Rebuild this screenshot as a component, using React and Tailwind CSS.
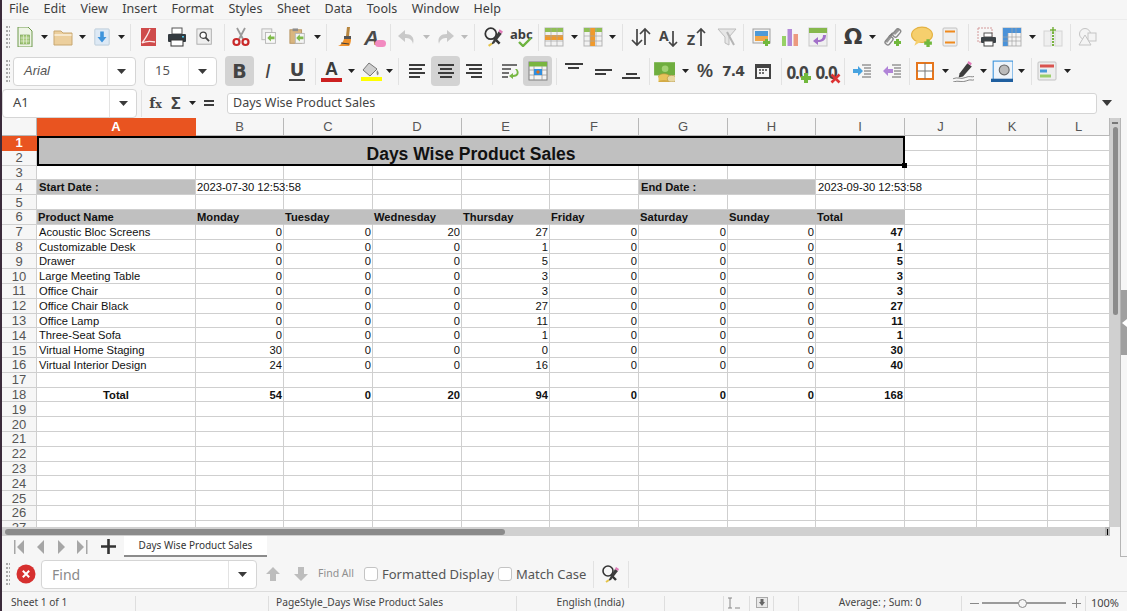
import React from 'react';

const UI_FONT = { fontFamily: '"Noto Sans", sans-serif' };

const Svg = ({ size = 20, children }) => (
  <svg width={size} height={size} viewBox="0 0 20 20" className="block">{children}</svg>
);

// ---- small toolbar parts ----
const Tool = ({ className = 'w-7', on, children }) => (
  <div className={`h-[30px] shrink-0 flex items-center justify-center rounded ${on ? 'bg-[#d3d3d3]' : ''} ${className}`}>{children}</div>
);

const Arrow = ({ className = 'w-2.5', color = '#222' }) => (
  <div className={`shrink-0 flex justify-center ${className}`}>
    <svg width="7" height="4" viewBox="0 0 7 4"><path d="M0 0h7L3.5 4z" fill={color} /></svg>
  </div>
);

const Sep = ({ className = 'w-2' }) => (
  <div className={`shrink-0 flex justify-center ${className}`}><div className="w-px h-[27px] bg-[#e2e2e2]" /></div>
);

const Grip = () => (
  <div className="w-[7px] shrink-0 flex flex-col gap-[2px] items-start pl-[2px]">
    {[0, 1, 2, 3, 4, 5].map((i) => (
      <div key={i} className="flex gap-[1px]"><div className="w-[1.5px] h-[2px] bg-[#aaa]" /><div className="w-[1.5px] h-[2px] bg-[#aaa]" /></div>
    ))}
  </div>
);

const Lines = ({ rows }) => (
  <Svg>{rows.map(([x, y, w, t = 2], i) => <rect key={i} x={x} y={y} width={w} height={t} fill="#3c3c3c" />)}</Svg>
);

const SheetGrid = ({ kind }) => (
  <Svg>
    <rect x="1" y="1" width="18" height="18" fill="#f2f2f2" stroke="#b5b5b5" />
    <rect x="1" y="1" width="18" height="4" fill="#8fbf55" />
    {kind === 'row' && <rect x="1" y="8" width="18" height="5" fill="#f09a2c" />}
    {kind === 'col' && <rect x="7" y="1" width="5" height="18" fill="#f09a2c" />}
    <path d="M1 9h18M1 14h18M7 1v18M13 1v18" stroke="#a8a8a8" strokeWidth="0.7" />
  </Svg>
);

const Magnifier = () => (
  <Svg size={22}>
    <circle cx="8" cy="7" r="5" fill="none" stroke="#333" strokeWidth="1.6" />
    <path d="M11 11l5 5" stroke="#333" strokeWidth="2.4" />
    <path d="M15 5l3 2-7 9-3 1z" fill="#3c3c3c" />
    <path d="M16 3l3 2-1 2-3-2z" fill="#e07ab8" />
    <path d="M6 18l3-2" stroke="#e5c44a" strokeWidth="2" />
  </Svg>
);

const PlusBadge = ({ x = 12, y = 12 }) => (
  <path d={`M${x + 2} ${y}h3v2h2v3h-2v2h-3v-2h-2v-3h2z`} fill="#71b83d" transform="translate(-1 0)" />
);

const ToolbarOne = () => (
  <div className="flex items-center h-[34px] pl-[2px]">
    <Grip />
    <Tool>
      <Svg>
        <path d="M3 0h10l4 4v16H3z" fill="#eef4e6" stroke="#6f9a4c" />
        <rect x="5.5" y="8" width="9" height="9" fill="#a8cb7d" stroke="#6f9a4c" strokeWidth="0.6" />
        <path d="M5.5 11h9M5.5 14h9M8.5 8v9M11.5 8v9" stroke="#eef4e6" strokeWidth="0.6" />
      </Svg>
    </Tool>
    <Arrow />
    <Tool>
      <Svg>
        <path d="M1 4h7l2 2h9v12H1z" fill="#eccf9d" stroke="#c8a771" />
        <rect x="1.5" y="7" width="17" height="2" fill="#f7e8cd" />
      </Svg>
    </Tool>
    <Arrow />
    <Tool className="w-7 ml-px">
      <Svg size={18}>
        <rect x="2" y="1" width="16" height="18" rx="1" fill="#dde9f5" stroke="#b9c9d8" />
        <path d="M8 4h4v6h3l-5 6-5-6h3z" fill="#3d94dc" />
      </Svg>
    </Tool>
    <Arrow />
    <Sep />
    <Tool>
      <Svg>
        <rect x="3" y="1" width="15" height="18" fill="#cf4b4b" />
        <path d="M12 2C10 8 7 12 4 16c4-2 9-2 13-1" fill="none" stroke="#fbe9e9" strokeWidth="1.3" />
      </Svg>
    </Tool>
    <Tool className="w-7 ml-px">
      <Svg>
        <rect x="5" y="1" width="10" height="6" fill="#fff" stroke="#555" />
        <rect x="1" y="7" width="18" height="8" rx="1" fill="#333a3f" />
        <rect x="4" y="13" width="12" height="6" fill="#fff" stroke="#333" />
        <rect x="15" y="9" width="2" height="1.5" fill="#4ec3e8" />
      </Svg>
    </Tool>
    <Tool>
      <Svg size={18}>
        <rect x="1" y="1" width="16" height="17" fill="#efefef" stroke="#a9a9a9" />
        <circle cx="8" cy="8" r="3.5" fill="#fff" stroke="#444" strokeWidth="1.4" />
        <path d="M10.5 10.5l4 4" stroke="#444" strokeWidth="2" />
      </Svg>
    </Tool>
    <Sep className="w-2.5" />
    <Tool className="w-6">
      <Svg>
        <path d="M6 1l6 11M14 1L8 12" stroke="#9a9a9a" strokeWidth="1.8" />
        <circle cx="5.5" cy="15" r="3" fill="none" stroke="#c92a2a" strokeWidth="2.2" />
        <circle cx="14.5" cy="15" r="3" fill="none" stroke="#c92a2a" strokeWidth="2.2" />
      </Svg>
    </Tool>
    <Tool className="w-7 ml-[3px]">
      <Svg size={18}>
        <rect x="1" y="1" width="11" height="12" fill="#f1f1f1" stroke="#b4b4b4" />
        <rect x="5" y="5" width="11" height="12" fill="#f8f8f8" stroke="#b4b4b4" />
        <path d="M7 11l4-4v2.5h4v3h-4V15z" fill="#7fbb4a" />
      </Svg>
    </Tool>
    <Tool>
      <Svg size={18}>
        <rect x="1" y="2" width="13" height="15" fill="#d9b67f" stroke="#b6935f" />
        <rect x="4" y="0.5" width="6" height="3" fill="#8c8c8c" />
        <rect x="7" y="6" width="10" height="11" fill="#f4f4f4" stroke="#b4b4b4" />
        <path d="M8 11l4-4v2.5h4v3h-4V15z" fill="#7fbb4a" />
      </Svg>
    </Tool>
    <Arrow />
    <Sep />
    <Tool className="w-[30px]">
      <Svg>
        <path d="M12 0h3l-1 9h-3z" fill="#b7863f" />
        <path d="M9 9h7v3H9z" fill="#555" />
        <path d="M9 12h7c0 3-1 6-2 7H3c3-1 5-4 6-7z" fill="#f0912a" />
        <path d="M6 16l8 1" stroke="#3c3c3c" strokeWidth="1" />
      </Svg>
    </Tool>
    <Tool>
      <div className="relative w-5 h-5">
        <span className="italic font-bold text-[21px] leading-5 text-[#4a4a4a]" style={{ fontFamily: '"Liberation Sans", sans-serif' }}>A</span>
        <div className="absolute right-[-2px] bottom-0 w-[11px] h-[7px] bg-[#f28ac0] rounded-sm" />
      </div>
    </Tool>
    <Sep className="w-[5px]" />
    <Tool>
      <Svg>
        <path d="M8 3L1 9l7 6v-4c4 0 7 1 8 6 2-7-2-10-8-10z" fill="#c9c9c9" />
      </Svg>
    </Tool>
    <Arrow color="#bbb" />
    <Tool>
      <Svg>
        <path d="M12 3l7 6-7 6v-4c-4 0-7 1-8 6-2-7 2-10 8-10z" fill="#c9c9c9" />
      </Svg>
    </Tool>
    <Arrow color="#bbb" />
    <Sep className="w-2.5" />
    <Tool><Magnifier /></Tool>
    <Tool>
      <div className="relative w-[22px] h-5 text-center">
        <span className="font-bold text-[13px] leading-[14px] block text-[#3c3c3c]" style={UI_FONT}>abc</span>
        <svg width="14" height="10" viewBox="0 0 14 10" className="absolute right-0 bottom-0"><path d="M1 5l4 4 8-8" fill="none" stroke="#6db33f" strokeWidth="2.4" /></svg>
      </div>
    </Tool>
    <Sep className="w-1.5" />
    <Tool className="w-[26px]"><SheetGrid kind="row" /></Tool>
    <Arrow className="w-2.5 ml-[2px]" />
    <Tool><SheetGrid kind="col" /></Tool>
    <Arrow />
    <Sep className="w-2.5" />
    <Tool>
      <Svg>
        <path d="M6 2v16M1 13l5 5 5-5M14 18V2M9 7l5-5 5 5" fill="none" stroke="#444" strokeWidth="1.7" />
      </Svg>
    </Tool>
    <Tool>
      <div className="relative w-5 h-5">
        <span className="absolute left-0 top-[-2px] font-bold text-[14px] text-[#444]" style={UI_FONT}>A</span>
        <svg width="20" height="20" viewBox="0 0 20 20" className="absolute inset-0"><path d="M14 4v15M10 15l4 4 4-4" fill="none" stroke="#444" strokeWidth="1.7" /></svg>
      </div>
    </Tool>
    <Tool>
      <div className="relative w-5 h-5">
        <span className="absolute left-0 bottom-[-3px] font-bold text-[14px] text-[#444]" style={UI_FONT}>Z</span>
        <svg width="20" height="20" viewBox="0 0 20 20" className="absolute inset-0"><path d="M14 19V2M10 6l4-4 4 4" fill="none" stroke="#444" strokeWidth="1.7" /></svg>
      </div>
    </Tool>
    <Tool className="w-7 ml-0.5">
      <Svg>
        <path d="M1 2h18l-7 8v8l-4-2v-6z" fill="#e6e6e6" stroke="#bdbdbd" />
        <path d="M10 5l7 13" stroke="#b5b5b5" strokeWidth="2" />
      </Svg>
    </Tool>
    <Sep className="w-[5px]" />
    <Tool className="w-8">
      <Svg>
        <rect x="1" y="2" width="17" height="14" fill="#f1f1f1" stroke="#9f9f9f" />
        <rect x="3" y="4" width="13" height="5" fill="#4d9ad8" />
        <path d="M3 9h13v5H3z" fill="#f0a64a" />
        <PlusBadge />
      </Svg>
    </Tool>
    <Tool className="w-6">
      <Svg>
        <rect x="2" y="9" width="4" height="10" fill="#97d166" />
        <rect x="7.5" y="2" width="4.5" height="17" fill="#b289d8" />
        <rect x="13.5" y="7" width="4.5" height="12" fill="#ec9a80" />
      </Svg>
    </Tool>
    <Tool className="w-7 ml-0.5">
      <Svg>
        <rect x="1" y="1" width="18" height="18" fill="#f0f0f0" stroke="#c7c7c7" />
        <rect x="1" y="1" width="18" height="5" fill="#86b84c" />
        <path d="M18 8c0 6-4 7-8 7v3l-5-4 5-4v3c3 0 5-1 5-5z" fill="#a371c9" />
      </Svg>
    </Tool>
    <Sep className="w-[7px]" />
    <Tool>
      <span className="font-bold text-[22px] leading-none text-[#3d3d3d]" style={{ fontFamily: '"DejaVu Sans", sans-serif' }}>Ω</span>
    </Tool>
    <Arrow />
    <Tool className="w-7 ml-0.5">
      <Svg>
        <path d="M3 15L8 9M11 7l5-5" stroke="#9a9a9a" strokeWidth="3" />
        <path d="M6 10l4-4" stroke="#777" strokeWidth="2" />
        <rect x="4" y="9" width="5" height="9" rx="2" fill="none" stroke="#8a8a8a" strokeWidth="1.4" transform="rotate(40 6 13)" />
        <rect x="11" y="1" width="5" height="9" rx="2" fill="none" stroke="#8a8a8a" strokeWidth="1.4" transform="rotate(40 13 6)" />
        <PlusBadge />
      </Svg>
    </Tool>
    <Tool className="w-7 ml-px">
      <Svg size={22}>
        <ellipse cx="10" cy="8" rx="9.5" ry="7" fill="#f6cf6d" stroke="#e4b243" />
        <path d="M5 13l-2 5 6-4z" fill="#f6cf6d" />
        <PlusBadge x={13} y={12} />
      </Svg>
    </Tool>
    <Tool>
      <Svg>
        <rect x="3" y="1" width="14" height="18" rx="1" fill="#efefef" stroke="#c2c2c2" />
        <rect x="5" y="3.5" width="10" height="2" fill="#f08a1d" />
        <rect x="5" y="14.5" width="10" height="2" fill="#f08a1d" />
      </Svg>
    </Tool>
    <Sep />
    <Tool className="w-7 ml-px">
      <Svg>
        <rect x="1" y="1" width="14" height="14" fill="#f7f7f7" stroke="#d49a9a" strokeDasharray="2 1" />
        <rect x="7" y="6" width="8" height="4" fill="#fff" stroke="#555" />
        <rect x="4" y="10" width="15" height="6" rx="1" fill="#3c4347" />
        <rect x="7" y="14" width="9" height="5" fill="#fff" stroke="#444" />
      </Svg>
    </Tool>
    <Tool className="w-[22px]">
      <Svg>
        <rect x="1" y="1" width="18" height="18" fill="#f4f4f4" stroke="#b5b5b5" />
        <rect x="1" y="1" width="18" height="5" fill="#4a92d9" />
        <rect x="1" y="1" width="5" height="18" fill="#4a92d9" />
        <path d="M1 10h18M1 14h18M10 1v18M14 1v18M6 6v13" stroke="#a5a5a5" strokeWidth="0.7" />
      </Svg>
    </Tool>
    <Arrow className="w-2.5 ml-1" />
    <Tool className="w-7 ml-[2px]">
      <Svg>
        <rect x="1" y="4" width="7" height="15" fill="#efefef" stroke="#d4d4d4" />
        <rect x="12" y="4" width="7" height="15" fill="#efefef" stroke="#d4d4d4" />
        <path d="M10 2v17" stroke="#79b340" strokeWidth="2" strokeDasharray="2 1" />
        <path d="M7 3h6M10 0v6" stroke="#79b340" strokeWidth="1.5" />
      </Svg>
    </Tool>
    <Sep className="w-1.5" />
    <Tool className="w-7 ml-px">
      <Svg>
        <circle cx="7" cy="7" r="5.5" fill="#f4f4f4" stroke="#c4c4c4" />
        <rect x="10" y="6" width="8" height="8" fill="#f4f4f4" stroke="#c4c4c4" />
        <path d="M7 8l6 10H1z" fill="#f4f4f4" stroke="#c4c4c4" />
      </Svg>
    </Tool>
  </div>
);

const Combo = ({ className, split, children }) => (
  <div className={`h-[29px] shrink-0 flex items-stretch bg-white border border-[#d5d5d5] rounded-[4px] ${className}`}>
    <div className="flex-1 flex items-center pl-2.5 text-[13px] text-[#555]">{children}</div>
    <div className={`border-l border-[#e3e3e3] flex items-center justify-center ${split}`}>
      <svg width="9" height="5" viewBox="0 0 9 5"><path d="M0 0h9L4.5 5z" fill="#3a3a3a" /></svg>
    </div>
  </div>
);

const BIG = 'font-bold text-[#444] leading-none';

const DecimalIcon = ({ children }) => (
  <div className="relative w-[24px] h-5 text-center">
    <span className={`${BIG} text-[17px] tracking-[-1px]`} style={UI_FONT}>0.0</span>
    {children}
  </div>
);

const ToolbarTwo = () => (
  <div className="flex items-center h-[34px] pl-[2px]">
    <Grip />
    <div className="w-0.5 shrink-0" />
    <Combo className="w-[123px]" split="w-[28px]"><span className="italic" style={{ fontFamily: '"Liberation Sans", sans-serif' }}>Arial</span></Combo>
    <div className="w-2 shrink-0" />
    <Combo className="w-[73px]" split="w-7"><span>15</span></Combo>
    <div className="w-2 shrink-0" />
    <Tool className="w-[29px]" on><span className={`${BIG} text-[19px]`} style={{ fontFamily: '"DejaVu Sans", sans-serif' }}>B</span></Tool>
    <Tool><span className={`${BIG} italic font-normal text-[19px]`} style={{ fontFamily: '"DejaVu Sans", sans-serif' }}>I</span></Tool>
    <Tool className="w-7 ml-px">
      <span className="text-[18px] leading-[18px] text-[#444] font-bold border-b-2 border-[#444] px-px" style={{ fontFamily: '"DejaVu Sans", sans-serif' }}>U</span>
    </Tool>
    <Sep />
    <Tool className="w-[25px]">
      <div className="flex flex-col items-center w-[21px]">
        <span className="font-bold text-[18px] leading-[16px] text-[#3c3c3c]" style={{ fontFamily: '"Liberation Sans", sans-serif' }}>A</span>
        <div className="w-[21px] h-[4px] mt-px bg-[#cc2020]" />
      </div>
    </Tool>
    <Arrow className="w-2.5 ml-0.5" />
    <Tool className="w-[26px] ml-0.5">
      <div className="flex flex-col items-center w-[21px]">
        <svg width="20" height="15" viewBox="0 0 20 15">
          <path d="M8 1l8 6-7 7-7-6z" fill="#cfcfcf" stroke="#777" />
          <path d="M16 8c2 2 2 4 1 5s-2-2-1-5z" fill="#888" />
        </svg>
        <div className="w-[21px] h-[4px] bg-[#ffff00]" />
      </div>
    </Tool>
    <Arrow />
    <Sep />
    <Tool className="w-7 ml-px"><Lines rows={[[2, 3, 16], [2, 7, 13], [2, 11, 16], [2, 15, 11]]} /></Tool>
    <Tool className="w-[29px]" on><Lines rows={[[2, 3, 16], [4, 7, 12], [2, 11, 16], [4, 15, 12]]} /></Tool>
    <Tool><Lines rows={[[2, 3, 16], [5, 7, 13], [2, 11, 16], [7, 15, 11]]} /></Tool>
    <Sep />
    <Tool className="w-[27px]">
      <Svg>
        <path d="M2 4h15M2 8h9M2 12h7M2 16h6" stroke="#444" strokeWidth="1.6" />
        <path d="M15 8c3 3 2 6-2 6v-2l-4 3 4 3v-2c6 0 7-5 4-8z" fill="#78b844" />
      </Svg>
    </Tool>
    <Tool className="w-[29px]" on>
      <Svg>
        <rect x="1" y="1" width="18" height="18" fill="#f4f4f4" stroke="#7f7f7f" />
        <rect x="1" y="1" width="18" height="4.5" fill="#79b53f" />
        <path d="M1 9h18M1 14h18M6 5v14M14 5v14" stroke="#999" strokeWidth="0.8" />
        <rect x="6" y="8" width="8" height="6" fill="#2f8fe0" />
        <path d="M8 11l2-2v4zM12 11l-2-2v4z" fill="#e0701c" />
      </Svg>
    </Tool>
    <Sep />
    <Tool><Lines rows={[[1, 2, 18], [4, 6, 11]]} /></Tool>
    <Tool className="w-7 ml-px"><Lines rows={[[2, 8, 17], [2, 12, 11]]} /></Tool>
    <Tool><Lines rows={[[5, 12, 11], [1, 16, 18]]} /></Tool>
    <Sep />
    <Tool className="w-[22px]">
      <Svg size={22}>
        <rect x="1" y="2" width="19" height="12" fill="#6fae3f" />
        <circle cx="11" cy="8" r="3" fill="#a2d173" />
        <ellipse cx="10" cy="15" rx="5" ry="2.5" fill="#e8c35a" stroke="#b4923a" strokeWidth="0.6" />
        <rect x="5" y="15" width="10" height="5" fill="#e8c35a" />
        <ellipse cx="10" cy="20" rx="5" ry="1.8" fill="#d3aa45" />
        <ellipse cx="17" cy="17" rx="4" ry="3" fill="#e8d8a2" stroke="#b4923a" strokeWidth="0.6" />
      </Svg>
    </Tool>
    <Arrow className="w-2.5 ml-[5px]" />
    <Tool className="w-7 ml-px"><span className={`${BIG} text-[18px]`} style={{ fontFamily: '"Liberation Sans", sans-serif' }}>%</span></Tool>
    <Tool><span className={`${BIG} text-[14px] tracking-[-1px]`} style={{ fontFamily: '"DejaVu Sans", sans-serif' }}>7.4</span></Tool>
    <Tool className="w-7 ml-0.5">
      <Svg>
        <rect x="2" y="3" width="16" height="15" fill="#444" />
        <rect x="4" y="7" width="12" height="9" fill="#f6f6f6" />
        <path d="M6 9h2M9 9h2M12 9h2M6 12h2M9 12h2" stroke="#444" strokeWidth="1.5" />
      </Svg>
    </Tool>
    <Sep />
    <Tool className="w-6">
      <DecimalIcon>
        <svg width="12" height="12" viewBox="0 0 12 12" className="absolute right-[-3px] bottom-[-3px]"><path d="M4 1h4v3h3v4H8v3H4V8H1V4h3z" fill="#71b83d" /></svg>
      </DecimalIcon>
    </Tool>
    <Tool className="w-7 ml-[3px]">
      <DecimalIcon>
        <svg width="11" height="11" viewBox="0 0 11 11" className="absolute right-[-3px] bottom-[-3px]"><path d="M1.5 1.5l8 8M9.5 1.5l-8 8" stroke="#d33" strokeWidth="2.6" /></svg>
      </DecimalIcon>
    </Tool>
    <Sep />
    <Tool>
      <Svg>
        <path d="M10 4h9M12 7h7M12 10h7M12 13h7M10 16h9" stroke="#666" strokeWidth="1" />
        <path d="M1 8h5V5l5 5-5 5v-3H1z" fill="#47a3e0" />
      </Svg>
    </Tool>
    <Tool className="w-7 ml-0.5">
      <Svg>
        <path d="M10 4h9M12 7h7M12 10h7M12 13h7M10 16h9" stroke="#666" strokeWidth="1" />
        <path d="M11 8H6V5l-5 5 5 5v-3h5z" fill="#b184d8" />
      </Svg>
    </Tool>
    <Sep className="w-[7px]" />
    <Tool className="w-6">
      <Svg>
        <rect x="2" y="2" width="16" height="16" fill="#fff" stroke="#e6761d" strokeWidth="2" />
        <path d="M10 2v16M2 10h16" stroke="#777" strokeWidth="1" />
      </Svg>
    </Tool>
    <Arrow className="w-2.5 ml-[3px]" />
    <Tool className="w-[26px]">
      <Svg size={22}>
        <path d="M14 3l4 3-8 9-4 1 1-4z" fill="#3c3c3c" />
        <path d="M15 1l3 2-1 2-3-2z" fill="#e07ab8" />
        <path d="M1 17c4-2 7 1 11-1s6 0 8-1M1 20c5-2 8 1 12-1s5 0 7-1" fill="none" stroke="#777" strokeWidth="0.8" />
      </Svg>
    </Tool>
    <Arrow className="w-2.5 ml-0.5" />
    <Tool>
      <Svg size={22}>
        <rect x="2" y="1" width="18" height="17" fill="#eef4fa" stroke="#3d94dc" />
        <circle cx="12" cy="9" r="4.5" fill="#bbb" stroke="#666" />
        <rect x="0" y="17" width="21" height="4" fill="#1f5f9f" />
      </Svg>
    </Tool>
    <Arrow />
    <Sep className="w-2 ml-px" />
    <Tool className="w-6">
      <Svg>
        <rect x="1" y="1" width="18" height="18" rx="1" fill="#eeeeee" stroke="#c2c2c2" />
        <rect x="3" y="3.5" width="14" height="3" fill="#d9534f" />
        <rect x="3" y="8.5" width="7" height="3" fill="#4a9bd8" />
        <rect x="3" y="13.5" width="11" height="3" fill="#9bcf6b" />
      </Svg>
    </Tool>
    <Arrow className="w-2.5 ml-[3px]" />
  </div>
);

const FormulaBar = () => (
  <div className="flex items-center h-[30px]">
    <Combo className="w-[135px]" split="w-[27px]"><span className="text-[#444]">A1</span></Combo>
    <Sep />
    <div className="w-[21px] text-center font-bold text-[#444] text-[14px]" style={{ fontFamily: '"DejaVu Serif", serif' }}>f<span className="text-[11px]">x</span></div>
    <div className="w-5 text-center font-bold text-[#444] text-[16px] leading-none" style={UI_FONT}>Σ</div>
    <Arrow className="w-3" />
    <div className="w-6 flex justify-center -ml-px"><Lines rows={[[5, 7, 10], [5, 11, 10]]} /></div>
    <div className="w-1.5 shrink-0" />
    <div className="w-[870px] h-[21px] shrink-0 flex items-center bg-white border border-[#d5d5d5] rounded-[3px] pl-[5px] text-[12.5px] text-[#444]">Days Wise Product Sales</div>
    <div className="w-[17px] flex justify-center ml-px">
      <svg width="10" height="6" viewBox="0 0 10 6"><path d="M0 0h10L5 6z" fill="#3a3a3a" /></svg>
    </div>
  </div>
);

// ---- sheet ----
const CELL = 'border-r border-b border-[#cfcfcf] px-[2px] whitespace-nowrap text-[11.2px] leading-[14px] text-[#111]';
const GRAY = 'bg-[#c0c0c0]';

const Corner = () => <div className="border-r border-b border-[#b8b8b8] bg-[#f6f6f6]" />;

const ColHead = ({ label, active }) => (
  <div className={`flex items-center justify-center border-r border-b text-[13px] ${active ? 'bg-[#e95420] border-[#e95420] text-white font-bold' : 'bg-[#f6f6f6] border-[#b8b8b8] text-[#555]'}`}>{label}</div>
);

const RowHead = ({ n, active }) => (
  <div className={`flex items-center justify-center border-r border-b text-[13px] leading-none overflow-hidden ${active ? 'bg-[#e95420] border-[#e95420] text-white font-bold' : 'bg-[#f6f6f6] border-[#cfcfcf] text-[#555]'}`}>{n}</div>
);

const Cell = ({ className = '', children }) => <div className={`${CELL} ${className}`}>{children}</div>;
const Num = ({ bold, children }) => <Cell className={`text-right pr-px ${bold ? 'font-bold' : ''}`}>{children}</Cell>;
const Blanks = ({ n }) => Array.from({ length: n }).map((_, i) => <Cell key={i} />);

const columns = ['A', 'B', 'C', 'D', 'E', 'F', 'G', 'H', 'I', 'J', 'K', 'L'];
const heads = ['Product Name', 'Monday', 'Tuesday', 'Wednesday', 'Thursday', 'Friday', 'Saturday', 'Sunday', 'Total'];

const products = [
  ['Acoustic Bloc Screens', 0, 0, 20, 27, 0, 0, 0, 47],
  ['Customizable Desk', 0, 0, 0, 1, 0, 0, 0, 1],
  ['Drawer', 0, 0, 0, 5, 0, 0, 0, 5],
  ['Large Meeting Table', 0, 0, 0, 3, 0, 0, 0, 3],
  ['Office Chair', 0, 0, 0, 3, 0, 0, 0, 3],
  ['Office Chair Black', 0, 0, 0, 27, 0, 0, 0, 27],
  ['Office Lamp', 0, 0, 0, 11, 0, 0, 0, 11],
  ['Three-Seat Sofa', 0, 0, 0, 1, 0, 0, 0, 1],
  ['Virtual Home Staging', 30, 0, 0, 0, 0, 0, 0, 30],
  ['Virtual Interior Design', 24, 0, 0, 16, 0, 0, 0, 40],
];

const totals = [54, 0, 20, 94, 0, 0, 0, 168];

const Sheet = () => (
  <div className="w-[1108px] h-[409px] overflow-hidden grid grid-cols-[35px_159px_88px_89px_89px_88px_89px_89px_88px_89px_72px_71px_62px] grid-rows-[18px] auto-rows-[14.8px] bg-white shrink-0" style={{ fontFamily: '"Liberation Sans", Arial, sans-serif' }}>
    <Corner />
    {columns.map((c) => <ColHead key={c} label={c} active={c === 'A'} />)}

    <RowHead n={1} active />
    <div className="col-span-9 row-span-2 relative bg-[#c0c0c0] border-2 border-black flex items-end justify-center">
      <span className="font-bold text-[17.5px] leading-[19px] text-[#111]">Days Wise Product Sales</span>
      <div className="absolute right-[-4px] bottom-[-4px] w-[5px] h-[5px] bg-black" />
    </div>
    <Blanks n={3} />
    <RowHead n={2} />
    <Blanks n={3} />

    <RowHead n={3} />
    <Blanks n={12} />

    <RowHead n={4} />
    <Cell className={`${GRAY} font-bold`}>Start Date :</Cell>
    <Cell className="pl-px">2023-07-30 12:53:58</Cell>
    <Blanks n={4} />
    <Cell className={`${GRAY} col-span-2 font-bold`}>End Date :</Cell>
    <Cell>2023-09-30 12:53:58</Cell>
    <Blanks n={3} />

    <RowHead n={5} />
    <Blanks n={12} />

    <RowHead n={6} />
    {heads.map((h) => <Cell key={h} className={`${GRAY} font-bold pl-px border-r-[#c0c0c0]`}>{h}</Cell>)}
    <Blanks n={3} />

    {products.map(([name, ...vals], i) => (
      <React.Fragment key={name}>
        <RowHead n={i + 7} />
        <Cell>{name}</Cell>
        {vals.map((v, j) => <Num key={j} bold={j === 7}>{v}</Num>)}
        <Blanks n={3} />
      </React.Fragment>
    ))}

    <RowHead n={17} />
    <Blanks n={12} />

    <RowHead n={18} />
    <Cell className="font-bold text-center">Total</Cell>
    {totals.map((v, j) => <Num key={j} bold>{v}</Num>)}
    <Blanks n={3} />

    {[19, 20, 21, 22, 23, 24, 25, 26, 27].map((n) => (
      <React.Fragment key={n}>
        <RowHead n={n} />
        <Blanks n={12} />
      </React.Fragment>
    ))}
  </div>
);

const VScroll = () => (
  <div className="w-[10px] h-[409px] shrink-0 bg-[#d0d0d0] flex flex-col items-center">
    <div className="h-[9px] w-full flex items-center justify-center"><div className="w-[6px] h-[2px] bg-[#777]" /></div>
    <div className="w-[5px] h-[188px] rounded-sm bg-[#8b8b8b]" />
  </div>
);

const HScroll = () => (
  <div className="w-[1108px] h-[9px] shrink-0 bg-[#d0d0d0] flex items-center justify-between">
    <div className="w-[500px] h-[6px] ml-[3px] rounded-sm bg-[#8b8b8b]" />
    <div className="w-[5px] h-full flex items-center justify-center bg-[#b5b5b5]"><div className="w-px h-[6px] bg-black" /></div>
  </div>
);

const NavBtn = ({ d }) => (
  <div className="w-[21px] flex justify-center">
    <svg width="12" height="14" viewBox="0 0 12 14"><path d={d} fill="#a6a6a6" /></svg>
  </div>
);

const TabStrip = () => (
  <div className="h-[21px] flex items-center pl-[6px]">
    <NavBtn d="M1 0h1.5v14H1zM11 0v14L4 7z" />
    <NavBtn d="M10 0v14L3 7z" />
    <NavBtn d="M3 0v14l7-7z" />
    <NavBtn d="M10 0h1.5v14H10zM1 0v14l7-7z" />
    <div className="w-[31px] flex justify-center ml-px">
      <svg width="15" height="15" viewBox="0 0 15 15"><path d="M6.2 0h2.6v6.2H15v2.6H8.800V15H6.2V8.800H0V6.2h6.2z" fill="#333" /></svg>
    </div>
    <div className="w-[143px] h-[21px] bg-white border-b-2 border-[#8b8b8b] flex items-center justify-center text-[10px] text-[#333]" style={UI_FONT}>Days Wise Product Sales</div>
  </div>
);

const Check = ({ label }) => (
  <div className="flex items-center shrink-0">
    <div className="w-[14px] h-[14px] bg-white border border-[#c4c4c4] rounded-[3px]" />
    <span className="ml-[4px] pt-[2px] text-[13px] text-[#555]">{label}</span>
  </div>
);

const FindBar = () => (
  <div className="h-[35px] flex items-center pl-[2px] border-b border-[#dcdcdc]" style={UI_FONT}>
    <Grip />
    <div className="w-[26px] ml-[2px] flex justify-center shrink-0">
      <svg width="20" height="20" viewBox="0 0 20 20">
        <circle cx="10" cy="10" r="9.5" fill="#d6302f" />
        <path d="M6.8 6.8l6.4 6.4M13.2 6.8l-6.4 6.4" stroke="#fff" strokeWidth="2" />
      </svg>
    </div>
    <div className="w-[2px] shrink-0" />
    <Combo className="w-[216px]" split="w-7"><span className="text-[#8a8a8a] text-[14px]">Find</span></Combo>
    <Tool className="w-7 ml-[2px]">
      <svg width="16" height="16" viewBox="0 0 16 16"><path d="M8 1l7 7h-4v7H5V8H1z" fill="#bdbdbd" /></svg>
    </Tool>
    <Tool className="w-7">
      <svg width="16" height="16" viewBox="0 0 16 16"><path d="M8 15l7-7h-4V1H5v7H1z" fill="#bdbdbd" /></svg>
    </Tool>
    <span className="ml-[3px] w-[46px] shrink-0 text-[10.5px] text-[#8f8f8f]">Find All</span>
    <Check label="Formatted Display" />
    <div className="w-[4px] shrink-0" />
    <Check label="Match Case" />
    <Sep className="w-[14px]" />
    <Tool className="w-[20px]"><Magnifier /></Tool>
    <Sep className="w-4" />
  </div>
);

const StatusCell = ({ className, children }) => (
  <div className={`h-[15px] shrink-0 border-r border-[#dedede] flex items-center ${className}`}>{children}</div>
);

const StatusBar = () => (
  <div className="h-[19px] flex items-center pt-[3px] text-[10.2px] text-[#444] pl-px" style={UI_FONT}>
    <StatusCell className="w-[133px] pl-[8px]">Sheet 1 of 1</StatusCell>
    <StatusCell className="w-[133px]" />
    <StatusCell className="w-[248px] pl-[7px]">PageStyle_Days Wise Product Sales</StatusCell>
    <StatusCell className="w-[148px] justify-center">English (India)</StatusCell>
    <StatusCell className="w-[59px]" />
    <StatusCell className="w-[26px] justify-center pr-[6px]">
      <svg width="16" height="12" viewBox="0 0 16 12"><path d="M2 1h4M2 11h4M4 1v10M9 11h5" stroke="#888" fill="none" /></svg>
    </StatusCell>
    <StatusCell className="w-[24px] justify-center">
      <svg width="12" height="12" viewBox="0 0 12 12"><rect x="0.5" y="0.5" width="11" height="10" fill="#e9e9e9" stroke="#aaa" /><path d="M4.5 2h3v3H9L6 9 3 5h1.5z" fill="#666" /></svg>
    </StatusCell>
    <StatusCell className="w-[25px]" />
    <StatusCell className="w-[163px] justify-center">Average: ; Sum: 0</StatusCell>
    <div className="w-[124px] h-[15px] shrink-0 border-r border-[#dedede] flex items-center pl-[8px] gap-[3px] text-[#888]">
      <div className="w-[9px] h-px bg-[#888]" />
      <div className="relative w-[84px] h-[2px] bg-[#9a9a9a]">
        <div className="absolute left-[36px] top-[-3.5px] w-[9px] h-[9px] rounded-full bg-[#f6f6f6] border border-[#8a8a8a]" />
      </div>
      <svg width="11" height="11" viewBox="0 0 11 11" className="ml-[2px]"><path d="M5.5 1v9M1 5.5h9" stroke="#888" /></svg>
    </div>
    <div className="flex-1 text-center text-[11px] pr-[3px]">100%</div>
  </div>
);

const Menu = () => (
  <div className="h-[20px] flex items-center pl-[7px] gap-[14.5px] text-[12.5px] text-[#3d3d3d] border-b border-[#ececec]" style={UI_FONT}>
    {['File', 'Edit', 'View', 'Insert', 'Format', 'Styles', 'Sheet', 'Data', 'Tools', 'Window', 'Help'].map((m) => <span key={m}>{m}</span>)}
  </div>
);

export default function App() {
  return (
    <div className="w-[1127px] h-[611px] overflow-hidden bg-[#f6f6f6] border-l-2 border-[#3a2a3a]" style={UI_FONT}>
      <Menu />
      <ToolbarOne />
      <ToolbarTwo />
      <FormulaBar />
      <div className="flex h-[439px]">
        <div className="w-[1118px] shrink-0">
          <div className="flex items-start">
            <Sheet />
            <VScroll />
          </div>
          <HScroll />
          <TabStrip />
        </div>
        <div className="flex-1 border-l border-b border-[#b5b5b5] pt-[172px]">
          <div className="w-[6px] h-[65px] bg-[#a0a0a0] flex items-center justify-center">
            <svg width="5" height="8" viewBox="0 0 5 8"><path d="M5 0v8L0 4z" fill="#fff" /></svg>
          </div>
        </div>
      </div>
      <FindBar />
      <StatusBar />
    </div>
  );
}
